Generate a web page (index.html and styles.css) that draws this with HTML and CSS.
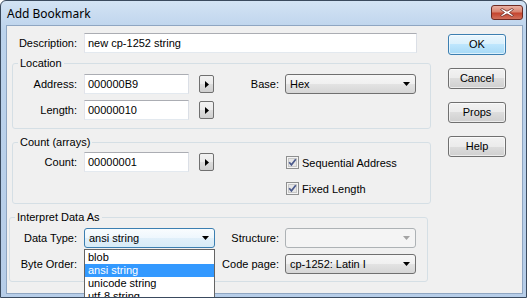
FILE: index.html
```html
<!DOCTYPE html>
<html>
<head>
  <meta charset="UTF-8">
  <title>Add Bookmark</title>
  <link rel="stylesheet" href="styles.css">
</head>
<body>
  <div class="window">
    <!-- Title bar -->
    <div class="titlebar">
      <span class="title">Add Bookmark</span>
      <div class="close">
        <svg width="14" height="9" viewBox="0 0 14 9">
          <path d="M2 0.5 L7 3.2 L12 0.5 L13.5 1.5 L9.5 4.5 L13.5 7.5 L12 8.5 L7 5.8 L2 8.5 L0.5 7.5 L4.5 4.5 L0.5 1.5 Z" fill="#fff" stroke="#6b2a22" stroke-width="0.8"/>
        </svg>
      </div>
    </div>

    <div class="client">
      <div class="form">
        <!-- Description -->
        <div class="row desc">
          <span class="lbl">Description:</span>
          <div class="text text-wide">new cp-1252 string</div>
        </div>

        <!-- Location -->
        <fieldset class="group">
          <legend>Location</legend>
          <div class="row first">
            <span class="lbl">Address:</span>
            <div class="text">000000B9</div>
            <div class="arrow"><svg width="4" height="7"><polygon points="0,0 4,3.5 0,7" fill="#000"/></svg></div>
            <span class="lbl2">Base:</span>
            <div class="combo">Hex<svg class="drop" width="7" height="4"><polygon points="0,0 7,0 3.5,4" fill="#000"/></svg></div>
          </div>
          <div class="row">
            <span class="lbl">Length:</span>
            <div class="text">00000010</div>
            <div class="arrow"><svg width="4" height="7"><polygon points="0,0 4,3.5 0,7" fill="#000"/></svg></div>
          </div>
        </fieldset>

        <!-- Count -->
        <fieldset class="group">
          <legend>Count (arrays)</legend>
          <div class="row first count">
            <span class="lbl">Count:</span>
            <div class="text">00000001</div>
            <div class="arrow"><svg width="4" height="7"><polygon points="0,0 4,3.5 0,7" fill="#000"/></svg></div>
            <div class="checks">
              <div class="check">
                <svg width="13" height="13" viewBox="0 0 13 13"><rect x="0.5" y="0.5" width="12" height="12" fill="#f4f4f4" stroke="#8e8f8f"/><rect x="2.5" y="2.5" width="8" height="8" fill="#e6e6e6" stroke="#c8c8c8"/><path d="M3.2 6.3 L5.4 8.8 L9.8 3.2" fill="none" stroke="#4b5a8c" stroke-width="1.7"/></svg>
                <span>Sequential Address</span>
              </div>
              <div class="check second">
                <svg width="13" height="13" viewBox="0 0 13 13"><rect x="0.5" y="0.5" width="12" height="12" fill="#f4f4f4" stroke="#8e8f8f"/><rect x="2.5" y="2.5" width="8" height="8" fill="#e6e6e6" stroke="#c8c8c8"/><path d="M3.2 6.3 L5.4 8.8 L9.8 3.2" fill="none" stroke="#4b5a8c" stroke-width="1.7"/></svg>
                <span>Fixed Length</span>
              </div>
            </div>
          </div>
        </fieldset>

        <!-- Interpret -->
        <fieldset class="group interp">
          <legend>Interpret Data As</legend>
          <div class="row first">
            <span class="lbl">Data Type:</span>
            <div class="combo focus">ansi string<svg class="drop" width="7" height="4"><polygon points="0,0 7,0 3.5,4" fill="#000"/></svg></div>
            <span class="lbl3">Structure:</span>
            <div class="combo disabled"><svg class="drop" width="7" height="4"><polygon points="0,0 7,0 3.5,4" fill="#a3a3a3"/></svg></div>
          </div>
          <div class="row">
            <span class="lbl">Byte Order:</span>
            <div class="combo"></div>
            <span class="lbl3">Code page:</span>
            <div class="combo">cp-1252: Latin I<svg class="drop" width="7" height="4"><polygon points="0,0 7,0 3.5,4" fill="#000"/></svg></div>
          </div>
        </fieldset>
      </div>

      <!-- Dialog buttons -->
      <div class="buttons">
        <div class="btn default">OK</div>
        <div class="btn">Cancel</div>
        <div class="btn">Props</div>
        <div class="btn">Help</div>
      </div>
    </div>

    <!-- Open dropdown of Data Type -->
    <div class="droplist">
      <div class="item">blob</div>
      <div class="item selected">ansi string</div>
      <div class="item">unicode string</div>
      <div class="item">utf-8 string</div>
    </div>
  </div>
</body>
</html>
```

FILE: styles.css
```css
/* Page */
body {
  margin: 0;
  background: #ffffff;
  overflow: hidden;
  font-family: "Liberation Sans", Arial, sans-serif;
  font-size: 11px;
  color: #000;
}
/* Outer window frame */
.window {
  position: relative;
  box-sizing: border-box;
  width: 527px;
  height: 298px;
  border: 1px solid #3a4a5e;
  border-radius: 6px 6px 0 0;
  background: linear-gradient(#d3e3f4, #bcd3ec 30px, #b6cde8);
  display: flex;
  flex-direction: column;
  overflow: hidden;
}
.titlebar {
  height: 24px;
  display: flex;
  justify-content: space-between;
  align-items: flex-start;
}
.title {
  font-family: "Noto Sans", "Liberation Sans", sans-serif;
  font-size: 12px;
  line-height: 16px;
  margin: 5px 0 0 6px;
}
.close {
  box-sizing: border-box;
  width: 32px;
  height: 15px;
  margin: 4px 3px 0 0;
  border: 1px solid #6d2a22;
  border-radius: 3px;
  background: linear-gradient(#e9b1a4, #d98470 45%, #c5452f 55%, #d2705b);
  display: flex;
  justify-content: center;
  align-items: center;
}
/* Client area */
.client {
  box-sizing: border-box;
  height: 269px;
  margin: 0 3px 0 5px;
  border: 1px solid #8fa6c2;
  background: #f0f0f0;
  display: flex;
}
.form {
  width: 441px;
  padding-top: 7px;
}
.row {
  display: flex;
  align-items: flex-start;
  height: 20px;
  margin-top: 6px;
}
.row.desc {
  margin-top: 0;
}
.row.first {
  margin-top: 4px;
}
.lbl {
  width: 64px;
  margin-right: 7px;
  text-align: right;
  line-height: 20px;
}
.desc .lbl {
  width: 70px;
}
.interp .lbl {
  width: 67px;
}
.lbl2 {
  width: 65px;
  margin-right: 6px;
  text-align: right;
  line-height: 20px;
}
.lbl3 {
  width: 64px;
  margin-right: 6px;
  text-align: right;
  line-height: 20px;
}
/* Text boxes */
.text {
  box-sizing: border-box;
  width: 105px;
  height: 20px;
  padding-left: 3px;
  line-height: 18px;
  background: #fff;
  border: 1px solid;
  border-color: #abadb3 #dbdfe6 #e3e9ef #e2e3ea;
}
.text-wide {
  width: 333px;
}
/* Small arrow buttons */
.arrow {
  box-sizing: border-box;
  width: 15px;
  height: 18px;
  margin: 1px 0 0 10px;
  border: 1px solid #707070;
  border-radius: 2px;
  background: linear-gradient(#f2f2f2, #ebebeb 50%, #dddddd 50%, #cfcfcf);
  display: flex;
  justify-content: center;
  align-items: center;
}
/* Dropdown combos */
.combo {
  position: relative;
  box-sizing: border-box;
  width: 131px;
  height: 20px;
  padding-left: 4px;
  line-height: 18px;
  border: 1px solid #707070;
  border-radius: 3px;
  background: linear-gradient(#f7f7f7, #f0f0f0 50%, #e3e3e3 50%, #d6d6d6);
}
.combo .drop {
  position: absolute;
  right: 5px;
  top: 7px;
}
.combo.focus {
  border-color: #3c7fb1;
  background: linear-gradient(#f9fcfe, #eef7fd 50%, #e1f0fa 50%, #d7ebf7);
}
.combo.disabled {
  border-color: #adb2b5;
  background: #f4f4f4;
}
/* Group boxes */
.group {
  box-sizing: border-box;
  width: 419px;
  margin: 4px 0 0 5px;
  padding: 0 0 8px 0;
  border: 1px solid #d5dfe5;
  border-radius: 3px;
}
.group + .group {
  margin-top: 7px;
}
.group legend {
  margin-left: 5px;
  padding: 0 2px;
  line-height: 13px;
}
.group.interp {
  margin-left: 2px;
  padding-bottom: 7px;
}
.row.count {
  height: auto;
  margin-top: 3px;
}
.checks {
  margin-left: 72px;
  padding-top: 4px;
}
.check {
  display: flex;
  align-items: center;
  height: 13px;
}
.check span {
  margin-left: 3px;
}
.check.second {
  margin-top: 13px;
}
/* Right hand buttons */
.buttons {
  display: flex;
  flex-direction: column;
  gap: 13px;
  padding-top: 8px;
}
.btn {
  box-sizing: border-box;
  width: 58px;
  height: 21px;
  border: 1px solid #707070;
  border-radius: 3px;
  background: linear-gradient(#f2f2f2, #ebebeb 50%, #dddddd 50%, #cfcfcf);
  text-align: center;
  line-height: 19px;
  box-shadow: inset 0 0 0 1px rgba(255, 255, 255, 0.6);
}
.btn.default {
  border-color: #3c7fb1;
  background: linear-gradient(#eaf6fd, #d9f0fc 50%, #bee6fd 50%, #a7d9f5);
}
/* Open list of the Data Type combo */
.droplist {
  position: absolute;
  left: 83px;
  top: 248px;
  width: 131px;
  box-sizing: border-box;
  border: 1px solid #646464;
  background: #fff;
  padding-top: 1px;
}
.item {
  height: 13px;
  line-height: 13px;
  padding-left: 3px;
}
.item.selected {
  background: #3399ff;
  color: #fff;
}
```
